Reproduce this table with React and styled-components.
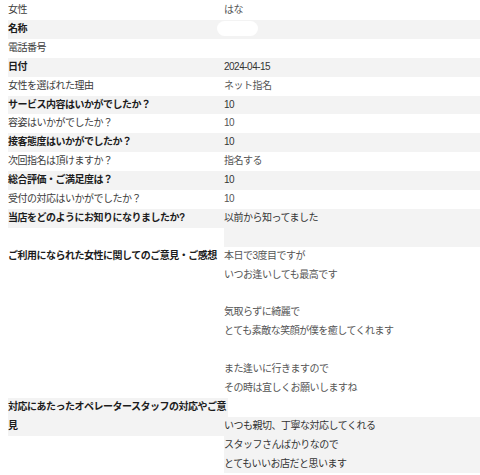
import React from 'react';
import styled, { createGlobalStyle } from 'styled-components';

const GlobalStyle = createGlobalStyle`
  body {
    margin: 0;
    background: #fff;
    font-family: "Liberation Sans", "Noto Sans CJK JP", sans-serif;
    font-size: 10px;
    letter-spacing: -0.5px;
  }
`;

const LINE = '18.9px';

const Sheet = styled.div`
  padding: 1px 0 0 8px;
`;

const Row = styled.div`
  display: flex;
  align-items: flex-start;
`;

const Label = styled.div`
  flex: 0 0 220px;
  margin-right: -4px;
  line-height: ${LINE};
  background: ${(p) => (p.$shaded ? '#f3f3f3' : 'transparent')};
  font-weight: ${(p) => (p.$bold ? 700 : 400)};
  color: ${(p) => (p.$bold ? '#1c1c1c' : '#3c3c3c')};
`;

const Value = styled.div`
  position: relative;
  flex: 1;
  min-height: ${LINE};
  margin-top: ${(p) => (p.$offset ? LINE : '0')};
  background: ${(p) => (p.$shaded ? '#f3f3f3' : 'transparent')};
  color: ${(p) => (p.$shaded ? '#333' : '#555')};
`;

const Line = styled.div`
  height: ${LINE};
  line-height: ${LINE};
  white-space: nowrap;
`;

const Redacted = styled.span`
  display: inline-block;
  width: 41px;
  height: 15px;
  margin-left: -7px;
  border-radius: 8px;
  background: #fff;
  vertical-align: -4px;
`;

const rows = [
  { label: '女性', lines: ['はな'] },
  { label: '名称', lines: [<Redacted key="r" />], bold: true },
  { label: '電話番号', lines: [''] },
  { label: '日付', lines: ['2024-04-15'], bold: true },
  { label: '女性を選ばれた理由', lines: ['ネット指名'] },
  { label: 'サービス内容はいかがでしたか？', lines: ['10'], bold: true },
  { label: '容姿はいかがでしたか？', lines: ['10'] },
  { label: '接客態度はいかがでしたか？', lines: ['10'], bold: true },
  { label: '次回指名は頂けますか？', lines: ['指名する'] },
  { label: '総合評価・ご満足度は？', lines: ['10'], bold: true },
  { label: '受付の対応はいかがでしたか？', lines: ['10'] },
  { label: '当店をどのようにお知りになりましたか?', lines: ['以前から知ってました', ''], bold: true },
  {
    label: 'ご利用になられた女性に関してのご意見・ご感想',
    lines: [
      '本日で3度目ですが',
      'いつお逢いしても最高です',
      '',
      '気取らずに綺麗で',
      'とても素敵な笑顔が僕を癒してくれます',
      '',
      'また逢いに行きますので',
      'その時は宜しくお願いしますね',
    ],
    bold: true,
  },
  {
    label: '対応にあたったオペレータースタッフの対応やご意見',
    lines: ['いつも親切、丁寧な対応してくれる', 'スタッフさんばかりなので', 'とてもいいお店だと思います'],
    bold: true,
    offset: true,
  },
];

export default function App() {
  return (
    <Sheet>
      <GlobalStyle />
      {rows.map((row, i) => {
        const shaded = i % 2 === 1;
        return (
          <Row key={row.label}>
            <Label $shaded={shaded} $bold={row.bold}>{row.label}</Label>
            <Value $shaded={shaded} $offset={row.offset}>
              {row.lines.map((line, j) => (
                <Line key={j}>{line}</Line>
              ))}
            </Value>
          </Row>
        );
      })}
    </Sheet>
  );
}
